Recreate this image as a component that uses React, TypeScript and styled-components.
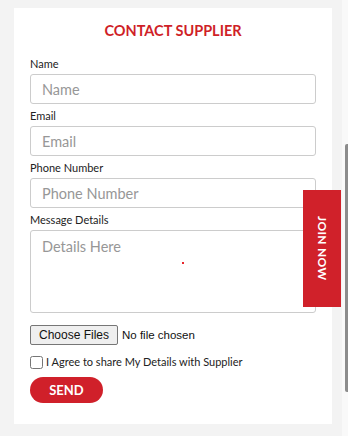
import React from "react";
import styled, { createGlobalStyle } from "styled-components";

const Global = createGlobalStyle`
  html, body { margin: 0; padding: 0; background: #f3f3f3; }
  body { font-family: Lato, "Open Sans", sans-serif; overflow: hidden; }
  * { box-sizing: border-box; }
`;

const Page = styled.div`
  position: relative;
  width: 348px;
  height: 436px;
  padding: 8px 0 0 14px;
`;

const Card = styled.form`
  width: 318px;
  height: 416px;
  background: #ffffff;
  padding: 13px 16px 0 16px;
  display: flex;
  flex-direction: column;
`;

const Title = styled.h2`
  margin: 0 0 16px 0;
  font-size: 14.5px;
  line-height: 20px;
  font-weight: 700;
  color: #cf1f28;
  text-align: center;
  text-transform: uppercase;
`;

const Fields = styled.div`
  display: flex;
  flex-direction: column;
  gap: 5px;
`;

const Field = styled.div`
  display: flex;
  flex-direction: column;
`;

const Label = styled.label`
  font-size: 11px;
  line-height: 14px;
  color: #222;
  margin-bottom: 3px;
`;

const inputBase = `
  width: 100%;
  border: 1px solid #cccccc;
  border-radius: 3px;
  padding: 0 11px;
  font-family: Lato, "Open Sans", sans-serif;
  font-size: 14.5px;
  color: #333;
  background: #fff;
  outline: none;
  &::placeholder { color: #979797; }
`;

const Input = styled.input`
  ${inputBase}
  height: 30px;
`;

const TextAreaWrap = styled.div`
  position: relative;
`;

const TextArea = styled.textarea`
  ${inputBase}
  display: block;
  height: 83px;
  padding-top: 6px;
  line-height: 20px;
  resize: none;
`;

const Dot = styled.span`
  position: absolute;
  left: 152px;
  top: 32px;
  width: 2px;
  height: 2px;
  background: #e8262c;
`;

const FileInput = styled.input`
  margin: 12px 0 0 0;
  font-family: "Liberation Sans", Arial, sans-serif;
  font-size: 11.5px;
  color: #111;
  height: 20px;
  &::file-selector-button {
    font-family: "Liberation Sans", Arial, sans-serif;
    font-size: 12px;
    height: 20px;
    padding: 0 8px;
    margin-right: 4px;
    border: 1px solid #767676;
    border-radius: 2px;
    background: #efefef;
    color: #111;
  }
`;

const CheckRow = styled.label`
  display: flex;
  align-items: center;
  gap: 3px;
  margin-top: 10px;
  font-size: 11px;
  color: #222;
  line-height: 14px;
`;

const Check = styled.input`
  margin: 0;
  width: 13px;
  height: 13px;
`;

const SendButton = styled.button`
  margin-top: 8px;
  width: 73px;
  height: 26px;
  border: none;
  border-radius: 13px;
  background: #d0202a;
  color: #fff;
  font-family: Lato, "Open Sans", sans-serif;
  font-weight: 700;
  font-size: 13px;
  padding: 0;
`;

const JoinTab = styled.div`
  position: absolute;
  left: 303px;
  top: 190px;
  width: 38px;
  height: 117px;
  background: #d0212a;
  color: #fff;
  display: flex;
  align-items: center;
  justify-content: center;
  writing-mode: vertical-rl;
  font-weight: 700;
  font-size: 12px;
  letter-spacing: 0.3px;
`;

const Track = styled.div`
  position: absolute;
  right: 0;
  top: 0;
  width: 6px;
  height: 436px;
  background: #f9f9f9;
`;

const Thumb = styled.div`
  position: absolute;
  right: 0;
  top: 144px;
  width: 3px;
  height: 248px;
  background: #8c8c8c;
  border-radius: 2px 0 0 2px;
`;

export default function App() {
  return (
    <>
      <Global />
      <Page>
        <Card onSubmit={(e) => e.preventDefault()}>
          <Title>Contact Supplier</Title>
          <Fields>
            <Field>
              <Label>Name</Label>
              <Input placeholder="Name" />
            </Field>
            <Field>
              <Label>Email</Label>
              <Input placeholder="Email" />
            </Field>
            <Field>
              <Label>Phone Number</Label>
              <Input placeholder="Phone Number" />
            </Field>
            <Field>
              <Label>Message Details</Label>
              <TextAreaWrap>
                <TextArea placeholder="Details Here" />
                <Dot />
              </TextAreaWrap>
            </Field>
          </Fields>
          <FileInput type="file" multiple />
          <CheckRow>
            <Check type="checkbox" />
            I Agree to share My Details with Supplier
          </CheckRow>
          <SendButton type="submit">SEND</SendButton>
        </Card>
        <Track>
          <Thumb />
        </Track>
        <JoinTab>JOIN NOW</JoinTab>
      </Page>
    </>
  );
}
